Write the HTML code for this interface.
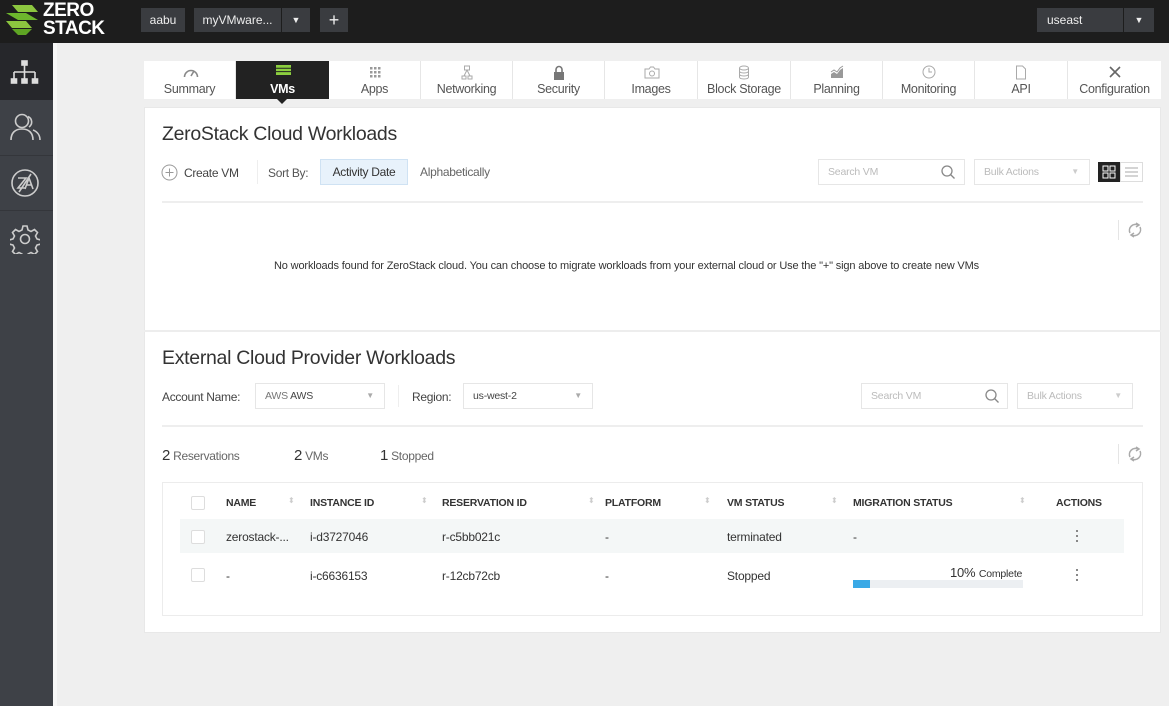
<!DOCTYPE html>
<html><head><meta charset="utf-8">
<style>
*{margin:0;padding:0;box-sizing:border-box}
body{width:1169px;height:706px;overflow:hidden;background:#efefef;font-family:"Liberation Sans",sans-serif;color:#333;position:relative}
.a{position:absolute}
.t{font-size:12px;letter-spacing:-0.3px;white-space:nowrap}
.top{left:0;top:0;width:1169px;height:43px;background:#1d1d1d}
.btn{background:#3a3c40;color:#eee;font-size:12px;height:24px;line-height:24px;top:8px;text-align:center}
.side{left:0;top:43px;width:53px;height:663px;background:#3e4147}
.tab{top:61px;height:38px;background:#fff;border-right:1px solid #e6e6e6;text-align:center;font-size:12.5px;letter-spacing:-0.3px;color:#555}
.tab span{position:absolute;left:0;right:0;top:21px}
.tab svg{position:absolute;left:50%;top:4px;margin-left:-7px}
.inp{border:1px solid #e6e6e6;background:#fff;height:26px;font-size:10.5px;color:#bbb;line-height:24px;padding-left:9px;letter-spacing:-0.2px}
.hdr{font-size:10.5px;font-weight:bold;color:#333;letter-spacing:-0.2px;top:497px}
.sort{color:#ccc;font-size:8px;top:496px}
.cell{font-size:12px;color:#333;letter-spacing:-0.2px}
.cb{width:14px;height:14px;border:1px solid #ddd;background:#fff;border-radius:2px}
.dots{width:3px}
.dots i{display:block;width:2px;height:2px;background:#888;margin-bottom:3px}
</style></head><body>
<div class="a top"></div>
<svg class="a" style="left:4px;top:3px" width="36" height="34" viewBox="0 0 36 34"><polygon points="8,2 28,2 34,9 14,9" fill="#8cc63f"/><polygon points="2,10 22,10 34,17 14,17" fill="#6db62d"/><polygon points="2,18 22,18 28,25 8,25" fill="#8cc63f"/><polygon points="8,26 28,26 22,32 14,32" fill="#5fa524"/></svg>
<div class="a" style="left:43px;top:2px;color:#fff;font-weight:bold;font-size:19px;line-height:18px;letter-spacing:-0.5px">ZERO<br>STACK</div>
<div class="a btn" style="left:141px;width:44px">aabu</div>
<div class="a btn" style="left:194px;width:87px">myVMware...</div>
<div class="a btn" style="left:282px;width:28px;font-size:9px">▼</div>
<div class="a btn" style="left:320px;width:28px;font-size:18px">+</div>
<div class="a btn" style="left:1037px;width:86px;text-align:left;padding-left:10px">useast</div>
<div class="a btn" style="left:1124px;width:30px;font-size:9px">▼</div>
<div class="a side"></div>
<div class="a" style="left:0;top:43px;width:53px;height:57px;background:#26272b"></div>
<div class="a" style="left:0;top:155px;width:53px;height:1px;background:#34363b"></div>
<div class="a" style="left:0;top:210px;width:53px;height:1px;background:#34363b"></div>
<svg class="a" style="left:10px;top:60px" width="30" height="26" viewBox="0 0 30 26" fill="none" stroke="#ddd" stroke-width="1.6"><rect x="12" y="1" width="5" height="4" fill="#ddd"/><path d="M14.5 5v7M4 12h21M4 12v7M14.5 12v7M25 12v7"/><rect x="1.5" y="19" width="5" height="4" fill="#ddd"/><rect x="12" y="19" width="5" height="4" fill="#ddd"/><rect x="22.5" y="19" width="5" height="4" fill="#ddd"/></svg>
<svg class="a" style="left:10px;top:113px" width="32" height="28" viewBox="0 0 32 28" fill="none" stroke="#ccc" stroke-width="1.6"><circle cx="12" cy="8" r="6.5"/><path d="M1 27c0-7 4-11 11-11s11 4 11 11"/><path d="M18 3.5a6 6 0 0 1 1 10.5M23 17c4 1.5 7 5 7 10"/></svg>
<svg class="a" style="left:10px;top:168px" width="30" height="30" viewBox="0 0 30 30" fill="none" stroke="#ccc" stroke-width="1.6"><circle cx="15" cy="15" r="13"/><path d="M8 10h8l-8 10h8M15 21l4-11 4 11M16.5 17h5M9 24l12-18"/></svg>
<svg class="a" style="left:10px;top:224px" width="30" height="30" viewBox="0 0 30 30" fill="none" stroke="#ccc" stroke-width="1.6"><circle cx="15" cy="15" r="4.5"/><path d="M13 2h4l1 4 3 1.5 3.5-2 3 3-2 3.5 1.5 3 4 1v4l-4 1-1.5 3 2 3.5-3 3-3.5-2-3 1.5-1 4h-4l-1-4-3-1.5-3.5 2-3-3 2-3.5-1.5-3-4-1v-4l4-1 1.5-3-2-3.5 3-3 3.5 2 3-1.5z"/></svg>
<div class="a" style="left:53px;top:43px;width:4px;height:663px;background:#f7f7f7"></div>
<div class="a tab" style="left:144px;width:92px"><svg width="16" height="14" viewBox="0 0 16 14" fill="none" stroke="#888" stroke-width="1.6"><path d="M1.5 12a6.5 6.5 0 0 1 13 0M8 11l3-5"/></svg><span>Summary</span></div>
<div class="a tab" style="left:236px;width:93px;background:#222;color:#fff;font-weight:bold;border:none"><svg width="15" height="16" viewBox="0 0 15 16"><rect x="0" y="0" width="15" height="10" fill="#8ccf3f"/><path d="M0 3.3h15M0 6.6h15M7.5 10v4M3 15h9" stroke="#222" stroke-width="1"/></svg><span>VMs</span></div>
<div class="a" style="left:277px;top:99px;width:0;height:0;border-left:5px solid transparent;border-right:5px solid transparent;border-top:5px solid #222"></div>
<div class="a tab" style="left:329px;width:92px"><svg width="14" height="14" viewBox="0 0 14 14" fill="#999"><rect x="2" y="2" width="2.5" height="2.5"/><rect x="6" y="2" width="2.5" height="2.5"/><rect x="10" y="2" width="2.5" height="2.5"/><rect x="2" y="6" width="2.5" height="2.5"/><rect x="6" y="6" width="2.5" height="2.5"/><rect x="10" y="6" width="2.5" height="2.5"/><rect x="2" y="10" width="2.5" height="2.5"/><rect x="6" y="10" width="2.5" height="2.5"/><rect x="10" y="10" width="2.5" height="2.5"/></svg><span>Apps</span></div>
<div class="a tab" style="left:421px;width:92px"><svg width="14" height="15" viewBox="0 0 14 15" fill="none" stroke="#aaa"><rect x="4.5" y="1" width="5" height="4"/><path d="M7 5l-3 6M7 5l3 6"/><rect x="2" y="11" width="4" height="3"/><rect x="8" y="11" width="4" height="3"/></svg><span>Networking</span></div>
<div class="a tab" style="left:513px;width:92px"><svg width="14" height="15" viewBox="0 0 14 15"><path d="M4 7V4.5a3 3 0 0 1 6 0V7" fill="none" stroke="#777" stroke-width="1.6"/><rect x="2" y="7" width="10" height="8" fill="#777"/></svg><span>Security</span></div>
<div class="a tab" style="left:605px;width:93px"><svg width="16" height="14" viewBox="0 0 16 14" fill="none" stroke="#aaa"><path d="M1 4h4l1.5-2h3L11 4h4v9H1z"/><circle cx="8" cy="8.5" r="2.5"/></svg><span>Images</span></div>
<div class="a tab" style="left:698px;width:93px"><svg width="14" height="15" viewBox="0 0 14 15" fill="none" stroke="#aaa"><ellipse cx="7" cy="3" rx="4.5" ry="2"/><path d="M2.5 3v9c0 2.6 9 2.6 9 0V3M2.5 6c0 2.6 9 2.6 9 0M2.5 9c0 2.6 9 2.6 9 0"/></svg><span>Block Storage</span></div>
<div class="a tab" style="left:791px;width:92px"><svg width="14" height="14" viewBox="0 0 14 14" fill="#999"><path d="M1 13V9l3-2 3 2 3-4 3-2v10z"/><path d="M1 7l3-2 3 2 3-4 3-2" fill="none" stroke="#999"/></svg><span>Planning</span></div>
<div class="a tab" style="left:883px;width:92px"><svg width="14" height="14" viewBox="0 0 14 14" fill="none" stroke="#aaa"><circle cx="7" cy="7" r="6"/><path d="M7 3v4h3"/></svg><span>Monitoring</span></div>
<div class="a tab" style="left:975px;width:93px"><svg width="14" height="15" viewBox="0 0 14 15" fill="none" stroke="#aaa"><path d="M2.5 1h6l3 3v10h-9z"/></svg><span>API</span></div>
<div class="a tab" style="left:1068px;width:93px;border:none"><svg width="14" height="14" viewBox="0 0 14 14" fill="none" stroke="#666" stroke-width="1.6"><path d="M2 2l10 10M12 2L2 12"/></svg><span>Configuration</span></div>
<div class="a" style="left:144px;top:107px;width:1017px;height:526px;background:#fff;border:1px solid #e8e8e8"></div>
<div class="a" style="left:144px;top:330px;width:1017px;height:2px;background:#ededed"></div>
<div class="a" style="left:162px;top:123px;font-size:19.5px;letter-spacing:-0.3px;color:#333">ZeroStack Cloud Workloads</div>
<svg class="a" style="left:161px;top:164px" width="17" height="17" viewBox="0 0 17 17" fill="none" stroke="#999"><circle cx="8.5" cy="8.5" r="7.5"/><path d="M8.5 4.5v8M4.5 8.5h8"/></svg>
<div class="a t" style="left:184px;top:166px;color:#444">Create VM</div>
<div class="a" style="left:257px;top:160px;width:1px;height:24px;background:#eee"></div>
<div class="a t" style="left:268px;top:166px;color:#555">Sort By:</div>
<div class="a t" style="left:320px;top:159px;width:88px;height:26px;background:#e8f2fb;border:1px solid #cfe2f3;line-height:24px;text-align:center;color:#333">Activity Date</div>
<div class="a t" style="left:420px;top:165px;color:#666">Alphabetically</div>
<div class="a inp" style="left:818px;top:159px;width:147px">Search VM</div>
<svg class="a" style="left:941px;top:165px" width="14" height="14" viewBox="0 0 14 14" fill="none" stroke="#888" stroke-width="1.3"><circle cx="6" cy="6" r="5"/><path d="M9.5 9.5l4 4"/></svg>
<div class="a inp" style="left:974px;top:159px;width:116px">Bulk Actions<span style="position:absolute;right:10px;font-size:8px;color:#ccc">▼</span></div>
<div class="a" style="left:1098px;top:162px;width:22px;height:20px;background:#222"></div>
<svg class="a" style="left:1102px;top:165px" width="14" height="14" viewBox="0 0 14 14" fill="none" stroke="#fff"><rect x="1" y="1" width="5" height="5"/><rect x="8" y="1" width="5" height="5"/><rect x="1" y="8" width="5" height="5"/><rect x="8" y="8" width="5" height="5"/></svg>
<div class="a" style="left:1120px;top:162px;width:23px;height:20px;border:1px solid #ddd"></div>
<svg class="a" style="left:1125px;top:166px" width="13" height="12" viewBox="0 0 13 12" stroke="#aaa"><path d="M0 2h13M0 6h13M0 10h13"/></svg>
<div class="a" style="left:162px;top:201px;width:981px;height:2px;background:#eee"></div>
<div class="a" style="left:1118px;top:220px;width:1px;height:20px;background:#e5e5e5"></div>
<svg class="a" style="left:1127px;top:221px" width="16" height="18" viewBox="0 0 16 18" fill="none" stroke="#aaa" stroke-width="1.5"><path d="M3 12A6 6 0 0 1 11 4M13 6a6 6 0 0 1-8 8"/><path d="M9 2l3 2-3 2M7 12l-3 2 3 2"/></svg>
<div class="a" style="left:274px;top:260px;font-size:11px;color:#333;letter-spacing:-0.15px">No workloads found for ZeroStack cloud. You can choose to migrate workloads from your external cloud or Use the "+" sign above to create new VMs</div>
<div class="a" style="left:162px;top:347px;font-size:19.5px;letter-spacing:-0.3px;color:#333">External Cloud Provider Workloads</div>
<div class="a t" style="left:162px;top:390px;color:#444">Account Name:</div>
<div class="a inp" style="left:255px;top:383px;width:130px;color:#777;font-size:10.5px">AWS <span style="color:#444">AWS</span><span style="position:absolute;right:10px;font-size:8px;color:#aaa">▼</span></div>
<div class="a" style="left:398px;top:385px;width:1px;height:22px;background:#eee"></div>
<div class="a t" style="left:412px;top:390px;color:#444">Region:</div>
<div class="a inp" style="left:463px;top:383px;width:130px;color:#444">us-west-2<span style="position:absolute;right:10px;font-size:8px;color:#aaa">▼</span></div>
<div class="a inp" style="left:861px;top:383px;width:147px">Search VM</div>
<svg class="a" style="left:985px;top:389px" width="14" height="14" viewBox="0 0 14 14" fill="none" stroke="#888" stroke-width="1.3"><circle cx="6" cy="6" r="5"/><path d="M9.5 9.5l4 4"/></svg>
<div class="a inp" style="left:1017px;top:383px;width:116px">Bulk Actions<span style="position:absolute;right:10px;font-size:8px;color:#ccc">▼</span></div>
<div class="a" style="left:162px;top:425px;width:981px;height:2px;background:#eee"></div>
<div class="a" style="left:1118px;top:444px;width:1px;height:20px;background:#e5e5e5"></div>
<svg class="a" style="left:1127px;top:445px" width="16" height="18" viewBox="0 0 16 18" fill="none" stroke="#aaa" stroke-width="1.5"><path d="M3 12A6 6 0 0 1 11 4M13 6a6 6 0 0 1-8 8"/><path d="M9 2l3 2-3 2M7 12l-3 2 3 2"/></svg>
<div class="a t" style="left:162px;top:447px;color:#666"><span style="font-size:15px;color:#333">2</span> Reservations</div>
<div class="a t" style="left:294px;top:447px;color:#666"><span style="font-size:15px;color:#333">2</span> VMs</div>
<div class="a t" style="left:380px;top:447px;color:#666"><span style="font-size:15px;color:#333">1</span> Stopped</div>
<div class="a" style="left:162px;top:482px;width:981px;height:134px;border:1px solid #ececec"></div>
<div class="a cb" style="left:191px;top:496px"></div>
<div class="a hdr" style="left:226px">NAME</div><div class="a sort" style="left:288px">⬍</div>
<div class="a hdr" style="left:310px">INSTANCE ID</div><div class="a sort" style="left:421px">⬍</div>
<div class="a hdr" style="left:442px">RESERVATION ID</div><div class="a sort" style="left:588px">⬍</div>
<div class="a hdr" style="left:605px">PLATFORM</div><div class="a sort" style="left:704px">⬍</div>
<div class="a hdr" style="left:727px">VM STATUS</div><div class="a sort" style="left:831px">⬍</div>
<div class="a hdr" style="left:853px">MIGRATION STATUS</div><div class="a sort" style="left:1019px">⬍</div>
<div class="a hdr" style="left:1056px">ACTIONS</div>
<div class="a" style="left:180px;top:519px;width:944px;height:34px;background:#f4f7f7"></div>
<div class="a cb" style="left:191px;top:530px"></div>
<div class="a cell" style="left:226px;top:530px">zerostack-...</div>
<div class="a cell" style="left:310px;top:530px">i-d3727046</div>
<div class="a cell" style="left:442px;top:530px">r-c5bb021c</div>
<div class="a cell" style="left:605px;top:530px">-</div>
<div class="a cell" style="left:727px;top:530px">terminated</div>
<div class="a cell" style="left:853px;top:530px">-</div>
<div class="a dots" style="left:1076px;top:530px"><i></i><i></i><i></i></div>
<div class="a cb" style="left:191px;top:568px"></div>
<div class="a cell" style="left:226px;top:569px">-</div>
<div class="a cell" style="left:310px;top:569px">i-c6636153</div>
<div class="a cell" style="left:442px;top:569px">r-12cb72cb</div>
<div class="a cell" style="left:605px;top:569px">-</div>
<div class="a cell" style="left:727px;top:569px">Stopped</div>
<div class="a cell" style="left:950px;top:565px;font-size:13px">10% <span style="font-size:10.5px">Complete</span></div>
<div class="a" style="left:853px;top:580px;width:170px;height:8px;background:#eceff2"></div>
<div class="a" style="left:853px;top:580px;width:17px;height:8px;background:#3aa9e6"></div>
<div class="a dots" style="left:1076px;top:569px"><i></i><i></i><i></i></div>
</body></html>
